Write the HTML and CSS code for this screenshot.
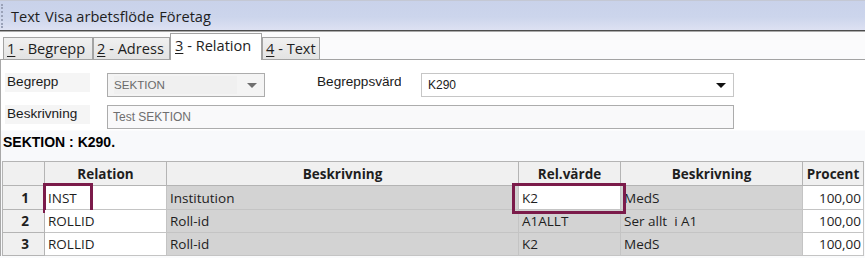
FILE: index.html
```html
<!DOCTYPE html>
<html lang="sv">
<head>
<meta charset="utf-8">
<title>Relation</title>
<link rel="stylesheet" href="styles.css">
</head>
<body>
<div class="menubar">
  <span class="grip"></span>
  <span class="menu-item">Text</span>
  <span class="menu-item">Visa arbetsflöde</span>
  <span class="menu-item">Företag</span>
</div>
<div class="tabstrip">
  <div class="tab tab-1"><u>1</u> - Begrepp</div>
  <div class="tab tab-2"><u>2</u> - Adress</div>
  <div class="tab tab-3 active"><u>3</u> - Relation</div>
  <div class="tab tab-4"><u>4</u> - Text</div>
</div>
<div class="panel">
  <div class="formrow">
    <div class="label">Begrepp</div>
    <div class="combo disabled combo-begrepp"><span class="val">SEKTION</span><span class="arrow"></span></div>
    <div class="label label-varde">Begreppsvärde</div>
    <div class="combo combo-varde"><span class="val">K290</span><span class="arrow"></span></div>
  </div>
  <div class="formrow row2">
    <div class="label">Beskrivning</div>
    <div class="input">Test SEKTION</div>
  </div>
  <div class="title">SEKTION : K290.</div>
  <table class="grid">
    <colgroup>
      <col class="c-num"><col class="c-rel"><col class="c-besk"><col class="c-relv"><col class="c-besk2"><col class="c-proc">
    </colgroup>
    <thead>
      <tr><th></th><th>Relation</th><th>Beskrivning</th><th>Rel.värde</th><th>Beskrivning</th><th>Procent</th></tr>
    </thead>
    <tbody>
      <tr class="r1">
        <td class="num">1</td>
        <td class="edit"><span class="sel sel-inst"></span>INST</td>
        <td class="ro">Institution</td>
        <td class="edit"><span class="sel sel-k2"></span>K2</td>
        <td class="ro">MedS</td>
        <td class="proc">100,00</td>
      </tr>
      <tr>
        <td class="num">2</td>
        <td class="edit">ROLLID</td>
        <td class="ro">Roll-id</td>
        <td class="ro">A1ALLT</td>
        <td class="ro">Ser allt&nbsp; i A1</td>
        <td class="proc">100,00</td>
      </tr>
      <tr>
        <td class="num">3</td>
        <td class="edit">ROLLID</td>
        <td class="ro">Roll-id</td>
        <td class="ro">K2</td>
        <td class="ro">MedS</td>
        <td class="proc">100,00</td>
      </tr>
    </tbody>
  </table>
</div>
</body>
</html>
```
FILE: styles.css
```css
html, body {
  margin: 0;
  padding: 0;
}
body {
  width: 865px;
  height: 258px;
  overflow: hidden;
  background: #fafbfc;
  font-family: "Open Sans", "Noto Sans", sans-serif;
  color: #1e1e1e;
}

/* menu bar */
.menubar {
  height: 29px;
  display: flex;
  align-items: center;
  border-top: 1px solid #c4c8d4;
  border-bottom: 1px solid #4c4c4c;
  box-shadow: 0 1px 0 #a9a9a9;
  background: linear-gradient(#c9d2ea 0%, #ccd5ec 55%, #dde1f2 100%);
  font-size: 14.6px;
}
.grip {
  width: 2px;
  height: 24px;
  margin-left: 1px;
  margin-right: 8px;
  border-left: 2px dotted #9aa2b8;
  box-sizing: border-box;
}
.menu-item {
  margin-right: 5px;
}

/* tabs */
.tabstrip {
  height: 27px;
  margin-top: 1px;
  padding-left: 3px;
  display: flex;
  align-items: flex-end;
  background: #fbfbfc;
  font-size: 14.6px;
}
.tab {
  box-sizing: border-box;
  height: 22px;
  padding: 0 3px;
  border: 1px solid #a3a3a3;
  border-bottom: none;
  background: linear-gradient(#f0f0f0, #e3e3e3);
  line-height: 21px;
  white-space: nowrap;
  overflow: hidden;
}
.tab u { text-decoration-thickness: 1px; text-underline-offset: 2px; }
.tab-1 { width: 90px; }
.tab-2 { width: 77px; }
.tab-3 { width: 92px; }
.tab-4 { width: 58px; }
.tab.active {
  height: 27px;
  background: #ffffff;
  line-height: 23px;
  position: relative;
  z-index: 1;
  margin-bottom: -1px;
  padding-left: 4px;
}

/* panel */
.panel {
  border-top: 1px solid #a3a3a3;
  border-left: 1px solid #a8a8a8;
  padding: 13px 0 0 1px;
  background: linear-gradient(#ffffff 0px, #ffffff 70px, #f8f9fb 71px);
}
.formrow {
  display: flex;
  align-items: flex-start;
  padding-left: 3px;
  height: 24px;
  font-family: "Liberation Sans", Arial, sans-serif;
}
.formrow.row2 {
  margin-top: 8px;
}
.label {
  width: 85px;
  height: 19px;
  line-height: 18px;
  padding-left: 2px;
  box-sizing: border-box;
  background: #f5f5f5;
  font-size: 13.6px;
  color: #1a1a1a;
  white-space: nowrap;
  overflow: hidden;
}
.combo, .input {
  box-sizing: border-box;
  height: 24px;
  border: 1px solid #acacac;
  display: flex;
  align-items: center;
  font-size: 12px;
  padding-left: 6px;
}
.combo-begrepp {
  margin-left: 17px;
  width: 158px;
  background: #f4f4f4;
  color: #6a6a6a;
  font-size: 11.6px;
}
.combo-begrepp .val {
  flex: 1;
  background: #f0f0f0;
  height: 18px;
  line-height: 18px;
  margin-right: 10px;
}
.label-varde {
  margin-left: 50px;
  width: 86px;
  background: transparent;
  padding-left: 2px;
}
.combo-varde {
  margin-left: 20px;
  width: 313px;
  background: #ffffff;
  border-color: #c6c6c6;
  color: #1a1a1a;
}
.combo-varde .val { flex: 1; }
.arrow {
  width: 0;
  height: 0;
  border-left: 5px solid transparent;
  border-right: 5px solid transparent;
  border-top: 5px solid #111;
  margin-right: 7px;
}
.combo.disabled .arrow { border-top-color: #6f6f6f; }
.input {
  margin-left: 17px;
  width: 627px;
  background: #f9f9fa;
  color: #6f6f6f;
  padding-left: 5px;
}

.title {
  margin-top: 5px;
  height: 27px;
  padding-left: 1px;
  font-family: "Liberation Sans", Arial, sans-serif;
  font-weight: bold;
  font-size: 14px;
  line-height: 16px;
  color: #000;
}

/* grid */
.grid {
  border-collapse: collapse;
  table-layout: fixed;
  width: 861px;
  font-size: 13.5px;
  border: 1px solid #9c9c9c;
}
.c-num { width: 42px; }
.c-rel { width: 122px; }
.c-besk { width: 352px; }
.c-relv { width: 102px; }
.c-besk2 { width: 182px; }
.c-proc { width: 61px; }
.grid th, .grid td {
  border: 1px solid #c4c4c4;
  padding: 0 3px;
  white-space: nowrap;
  overflow: visible;
}
.grid th {
  height: 23px;
  background: #f0f0f0;
  font-weight: bold;
  text-align: center;
  border-color: #b4b4b4;
}
.grid td {
  height: 22px;
  line-height: 18px;
}
.grid .r1 td { height: 23px; }
.grid td.num {
  background: #f0f0f0;
  font-weight: bold;
  text-align: right;
  padding-right: 15px;
  border-color: #b4b4b4;
}
.grid td.edit {
  background: #ffffff;
  position: relative;
}
.grid td.ro {
  background: #d3d3d3;
}
.grid td.proc {
  background: #ffffff;
  text-align: right;
  padding-right: 2px;
}
.sel {
  position: absolute;
  border: 3px solid #7b1b4a;
  box-sizing: border-box;
  pointer-events: none;
}
.sel-inst {
  left: -2px;
  top: -3px;
  width: 50px;
  height: 30px;
}
.sel-k2 {
  left: -7px;
  top: -3px;
  width: 114px;
  height: 31px;
}
```
